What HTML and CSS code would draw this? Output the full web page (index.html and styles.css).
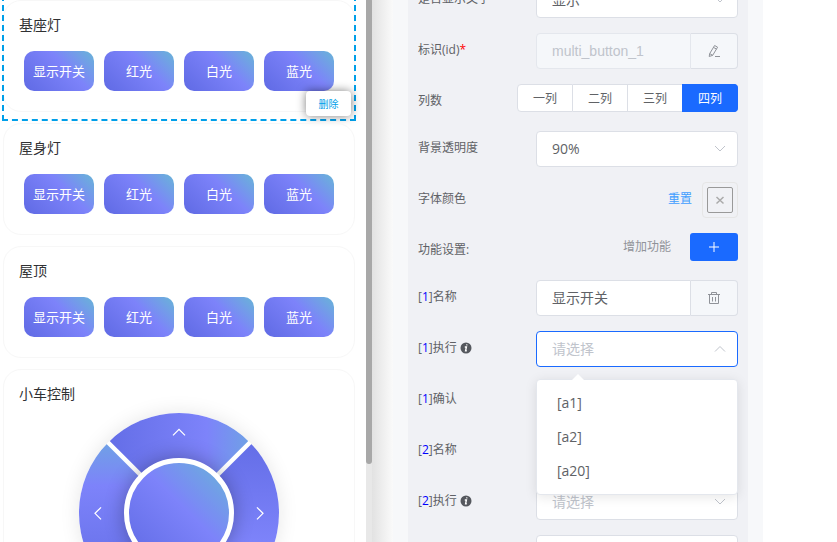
FILE: index.html
```
<!DOCTYPE html>
<html lang="zh-CN">
<head>
    <meta charset="UTF-8">
    <meta name="viewport" content="width=device-width, initial-scale=1.0">
    <title>组件编辑</title>
    <link rel="stylesheet" href="styles.css">
</head>
<body>
    <main class="preview">
        <section class="widget active">
            <div class="card">
                <h2 class="card__title">基座灯</h2>
                <div class="buttons">
                    <button class="btn">显示开关</button>
                    <button class="btn">红光</button>
                    <button class="btn">白光</button>
                    <button class="btn">蓝光</button>
                </div>
            </div>
            <button class="delete">删除</button>
        </section>
        <section class="widget">
            <div class="card">
                <h2 class="card__title">屋身灯</h2>
                <div class="buttons">
                    <button class="btn">显示开关</button>
                    <button class="btn">红光</button>
                    <button class="btn">白光</button>
                    <button class="btn">蓝光</button>
                </div>
            </div>
        </section>
        <section class="widget">
            <div class="card">
                <h2 class="card__title">屋顶</h2>
                <div class="buttons">
                    <button class="btn">显示开关</button>
                    <button class="btn">红光</button>
                    <button class="btn">白光</button>
                    <button class="btn">蓝光</button>
                </div>
            </div>
        </section>
        <section class="widget">
            <div class="card">
                <h2 class="card__title">小车控制</h2>
                <div class="wheel">
                    <div class="wheel__ring">
                        <button class="wheel__key up" aria-label="上"><svg viewBox="0 0 14 14"><path d="M1 10l6-6 6 6"/></svg></button>
                        <button class="wheel__key right" aria-label="右"><svg viewBox="0 0 14 14"><path d="M1 10l6-6 6 6"/></svg></button>
                        <button class="wheel__key left" aria-label="左"><svg viewBox="0 0 14 14"><path d="M1 10l6-6 6 6"/></svg></button>
                        <button class="wheel__key down" aria-label="下"><svg viewBox="0 0 14 14"><path d="M1 10l6-6 6 6"/></svg></button>
                    </div>
                    <button class="wheel__center" aria-label="中"></button>
                </div>
            </div>
        </section>
    </main>
    <div class="scrollbar"><div class="scrollbar__thumb"></div></div>
    <div class="gutter"></div>
    <aside class="panel">
        <form class="form">
            <div class="row">
                <label class="label" for="showText">是否显示文字</label>
                <div class="control select">
                    <select class="field" id="showText"><option>显示</option><option>隐藏</option></select>
                    <svg class="arrow" viewBox="0 0 12 12"><path d="M1 3l5 5 5-5"/></svg>
                </div>
            </div>
            <div class="row">
                <label class="label" for="widgetId">标识(id)<span class="required">*</span></label>
                <div class="control group">
                    <input class="field field_latin" id="widgetId" type="text" value="multi_button_1" disabled>
                    <button class="append" type="button" aria-label="编辑">
                        <svg class="icon" viewBox="0 0 14 14"><path d="M7.600 1.500l3 1.700-4.900 8.100-3.500 1.200.5-2.900zM6.500 3.400l3 1.700M2.700 9.600l3 1.700M8 12.500h5"/></svg>
                    </button>
                </div>
            </div>
            <div class="row">
                <span class="label" id="colsLabel">列数</span>
                <div class="radios" role="radiogroup" aria-labelledby="colsLabel">
                    <label class="radio"><input type="radio" name="cols"><span>一列</span></label>
                    <label class="radio"><input type="radio" name="cols"><span>二列</span></label>
                    <label class="radio"><input type="radio" name="cols"><span>三列</span></label>
                    <label class="radio"><input type="radio" name="cols" checked><span>四列</span></label>
                </div>
            </div>
            <div class="row">
                <label class="label" for="opacity">背景透明度</label>
                <div class="control select">
                    <select class="field" id="opacity"><option>90%</option></select>
                    <svg class="arrow" viewBox="0 0 12 12"><path d="M1 3l5 5 5-5"/></svg>
                </div>
            </div>
            <div class="row">
                <span class="label">字体颜色</span>
                <a class="reset" href="#">重置</a>
                <button class="color" type="button" aria-label="选择颜色">
                    <span class="color__inner"><svg viewBox="0 0 12 12"><path d="M2.500 3l7 6.500M9.500 3l-7 6.500"/></svg></span>
                </button>
            </div>
            <div class="row">
                <span class="label">功能设置:</span>
                <span class="hint">增加功能</span>
                <button class="add" type="button" aria-label="增加功能"><svg viewBox="0 0 12 12"><path d="M6 1v10M1 6h10"/></svg></button>
            </div>
            <div class="row">
                <label class="label" for="name1">[<span class="num">1</span>]名称</label>
                <div class="control group">
                    <input class="field" id="name1" type="text" value="显示开关">
                    <button class="append" type="button" aria-label="删除">
                        <svg class="icon" viewBox="0 0 14 14"><path d="M1 3.500h12M4.500 3.500v-2h5v2M2.500 3.500v9h9v-9M5.500 6v4.500M8.500 6v4.500"/></svg>
                    </button>
                </div>
            </div>
            <div class="row">
                <label class="label" for="run1">[<span class="num">1</span>]执行
                    <svg class="info" viewBox="0 0 12 12"><circle cx="6" cy="6" r="5.500"/><path d="M6.900 2.300l-.2 1.100M4.800 5h1.600l-.8 3.800h1.200"/></svg>
                </label>
                <div class="control select open">
                    <select class="field placeholder" id="run1"><option>请选择</option></select>
                    <svg class="arrow" viewBox="0 0 12 12"><path d="M1 8.500l5-5 5 5"/></svg>
                    <ul class="dropdown">
                        <li class="dropdown__item">[a1]</li>
                        <li class="dropdown__item">[a2]</li>
                        <li class="dropdown__item">[a20]</li>
                    </ul>
                </div>
            </div>
            <div class="row">
                <label class="label" for="confirm1">[<span class="num">1</span>]确认</label>
                <div class="control"><input class="field" id="confirm1" type="text"></div>
            </div>
            <div class="row">
                <label class="label" for="name2">[<span class="num">2</span>]名称</label>
                <div class="control"><input class="field" id="name2" type="text"></div>
            </div>
            <div class="row">
                <label class="label" for="run2">[<span class="num">2</span>]执行
                    <svg class="info" viewBox="0 0 12 12"><circle cx="6" cy="6" r="5.500"/><path d="M6.900 2.300l-.2 1.100M4.800 5h1.600l-.8 3.800h1.200"/></svg>
                </label>
                <div class="control select">
                    <select class="field placeholder" id="run2"><option>请选择</option></select>
                    <svg class="arrow" viewBox="0 0 12 12"><path d="M1 3l5 5 5-5"/></svg>
                </div>
            </div>
            <div class="row row_end">
                <div class="control"><input class="field" type="text" aria-label="确认"></div>
            </div>
        </form>
    </aside>
</body>
</html>
```
FILE: styles.css
```
* {
    box-sizing: border-box;
}
body {
    margin: 0;
    height: 100vh;
    overflow: hidden;
    display: grid;
    grid-template-columns: 366fr 6px 21px 370fr 74fr;
    grid-template-rows: 100%;
    font-family: "Open Sans", "Noto Sans CJK SC", sans-serif;
    font-size: 12px;
    color: #606266;
    background-color: #fff;
}
button, input, select {
    font-family: inherit;
    margin: 0;
}
button {
    padding: 0;
    border: none;
    cursor: pointer;
}
svg {
    fill: none;
    stroke: currentColor;
}

/* preview */
.preview {
    padding: 0 11px 0 3px;
    overflow: hidden;
}
.widget {
    position: relative;
    padding-bottom: 8px;
    margin-bottom: 3px;
}
.widget.active {
    margin-top: -4px;
    padding-top: 4px;
    outline: 2px dashed #009fe9;
    outline-offset: -1px;
}
.card {
    padding: 14px 0 20px;
    border: 1px solid #f7f7f7;
    border-radius: 18px;
}
.card__title {
    margin: 0 15px;
    font-size: 14px;
    font-weight: 400;
    line-height: 20px;
    color: #303133;
}
.buttons {
    display: grid;
    grid-template-columns: repeat(4, 1fr);
    gap: 10px;
    padding: 16px 20px 0;
}
.btn {
    height: 40px;
    padding-bottom: 2px;
    border-radius: 10px;
    font-size: 13px;
    color: #fff;
    background: linear-gradient(45deg, #5f6ae4, #7d83fa 60%, #68b5d7);
}
.delete {
    position: absolute;
    right: 4px;
    bottom: 4px;
    width: 45px;
    height: 25px;
    border-radius: 4px;
    font-size: 10px;
    color: #009fe9;
    background-color: #fff;
    box-shadow: 0 0 10px rgba(0, 0, 0, 0.5);
}

/* wheel */
.wheel {
    display: grid;
    place-items: center;
    width: 200px;
    margin: 9px auto 0;
    border-radius: 50%;
    box-shadow: 0 0 20px rgba(0, 0, 0, 0.1);
}
.wheel__ring, .wheel__center {
    grid-area: 1 / 1;
}
.wheel__ring {
    display: grid;
    grid-template-columns: 1fr 1fr;
    gap: 5px;
    width: 200px;
    height: 200px;
    border-radius: 50%;
    overflow: hidden;
    background-color: #fff;
    transform: rotate(45deg);
}
.wheel__key {
    display: grid;
    place-items: center;
    padding: 0 11px 11px 0;
    color: #fff;
    background: linear-gradient(45deg, #646ee7, #7d83fa 70%, #70a0e6);
}
.wheel__key svg {
    width: 14px;
    height: 14px;
    stroke-width: 1.3;
    transform: rotate(-45deg);
}
.right {
    transform: rotate(90deg);
}
.down {
    transform: rotate(180deg);
}
.left {
    transform: rotate(270deg);
}
.wheel__center {
    position: relative;
    width: 110px;
    height: 110px;
    border: 5px solid #fff;
    border-radius: 50%;
    background: linear-gradient(45deg, #5f6ae4, #7d83fa 55%, #68b5d7);
    box-shadow: 0 0 20px rgba(0, 0, 0, 0.3);
}

/* scrollbar */
.scrollbar {
    background-color: #e8e8e8;
}
.scrollbar__thumb {
    height: 86%;
    margin-top: -2px;
    border-radius: 3px;
    background-color: #a8a8a8;
}
.gutter {
    background: linear-gradient(90deg, #e2e2e2, #fafafa);
}

/* settings */
.panel {
    padding: 0 15px;
    overflow: hidden;
    background-color: #f7f8fa;
}
.form {
    min-height: 100%;
    padding: 0 10px;
    margin-top: -18px;
    background-color: #f0f1f5;
}
.row {
    display: flex;
    align-items: flex-start;
    min-height: 32px;
    margin-bottom: 15px;
}
.row_end {
    justify-content: flex-end;
}
.label {
    flex: 1;
    display: flex;
    align-items: center;
    padding-top: 2px;
    line-height: 30px;
}
.required {
    color: #f00;
}
.num {
    color: #00f;
}
.info {
    width: 12px;
    height: 12px;
    margin-left: 3px;
}
.info circle {
    fill: #55585e;
    stroke: none;
}
.info path {
    stroke: #fff;
    stroke-width: 1.4;
}
.control {
    flex: 0 0 202px;
}
.field {
    display: block;
    width: 100%;
    height: 36px;
    padding: 0 15px 2px;
    border: 1px solid #dcdfe6;
    border-radius: 4px;
    outline: none;
    font-size: 14px;
    color: #606266;
    background-color: #fff;
    appearance: none;
}
.field:disabled {
    color: #c0c4cc;
    border-color: #e4e7ed;
    background-color: #f5f7fa;
}
.field_latin {
    padding-bottom: 1px;
    font-family: "Liberation Sans", Arial, sans-serif;
}
.placeholder {
    color: #c0c4cc;
}
.select {
    position: relative;
}
.arrow {
    position: absolute;
    right: 12px;
    top: 12px;
    width: 12px;
    height: 12px;
    color: #c0c4cc;
    pointer-events: none;
}
.open .field {
    border-color: #1a6aff;
}
.group {
    display: flex;
}
.group .field {
    flex: 1;
    min-width: 0;
    border-radius: 4px 0 0 4px;
}
.append {
    display: grid;
    place-items: center;
    flex: 0 0 47px;
    height: 36px;
    border: 1px solid #dcdfe6;
    border-left: none;
    border-radius: 0 4px 4px 0;
    color: #909399;
    background-color: #f5f7fa;
}
.icon {
    width: 14px;
    height: 14px;
}
.radios {
    display: flex;
}
.radio input {
    position: absolute;
    opacity: 0;
}
.radio span {
    display: block;
    padding: 2px 15px 0;
    border: 1px solid #dcdfe6;
    border-left: none;
    line-height: 24px;
    background-color: #fff;
}
.radio:first-child span {
    border-left: 1px solid #dcdfe6;
    border-radius: 4px 0 0 4px;
}
.radio:last-child span {
    border-radius: 0 4px 4px 0;
}
.radio input:checked + span {
    color: #fff;
    border-color: #1a6aff;
    background-color: #1a6aff;
    box-shadow: -1px 0 0 #1a6aff;
}
.reset {
    margin-right: 10px;
    padding-top: 2px;
    line-height: 30px;
    color: #409eff;
    text-decoration: none;
}
.color {
    width: 36px;
    height: 36px;
    padding: 4px;
    border: 1px solid #e6e6e6;
    border-radius: 4px;
    background: none;
}
.color__inner {
    display: grid;
    place-items: center;
    height: 26px;
    border: 1px solid #999;
    border-radius: 2px;
    color: #aaa;
}
.color__inner svg {
    width: 12px;
    height: 12px;
    stroke-width: 1.5;
}
.hint {
    margin-right: 19px;
    line-height: 28px;
    color: #909399;
}
.add {
    display: grid;
    place-items: center;
    width: 48px;
    height: 28px;
    border-radius: 3px;
    color: #fff;
    background-color: #1a6aff;
}
.add svg {
    width: 12px;
    height: 12px;
}
.dropdown {
    position: absolute;
    z-index: 1;
    top: 48px;
    left: 0;
    width: 100%;
    margin: 0;
    padding: 6px 0;
    border: 1px solid #e4e7ed;
    border-radius: 4px;
    list-style: none;
    font-size: 14px;
    background-color: #fff;
    box-shadow: 0 2px 12px rgba(0, 0, 0, 0.1);
}
.dropdown::before {
    content: "";
    position: absolute;
    left: 35px;
    top: -6px;
    border: 6px solid transparent;
    border-top: none;
    border-bottom-color: #fff;
}
.dropdown__item {
    padding: 0 20px;
    line-height: 34px;
}
```
